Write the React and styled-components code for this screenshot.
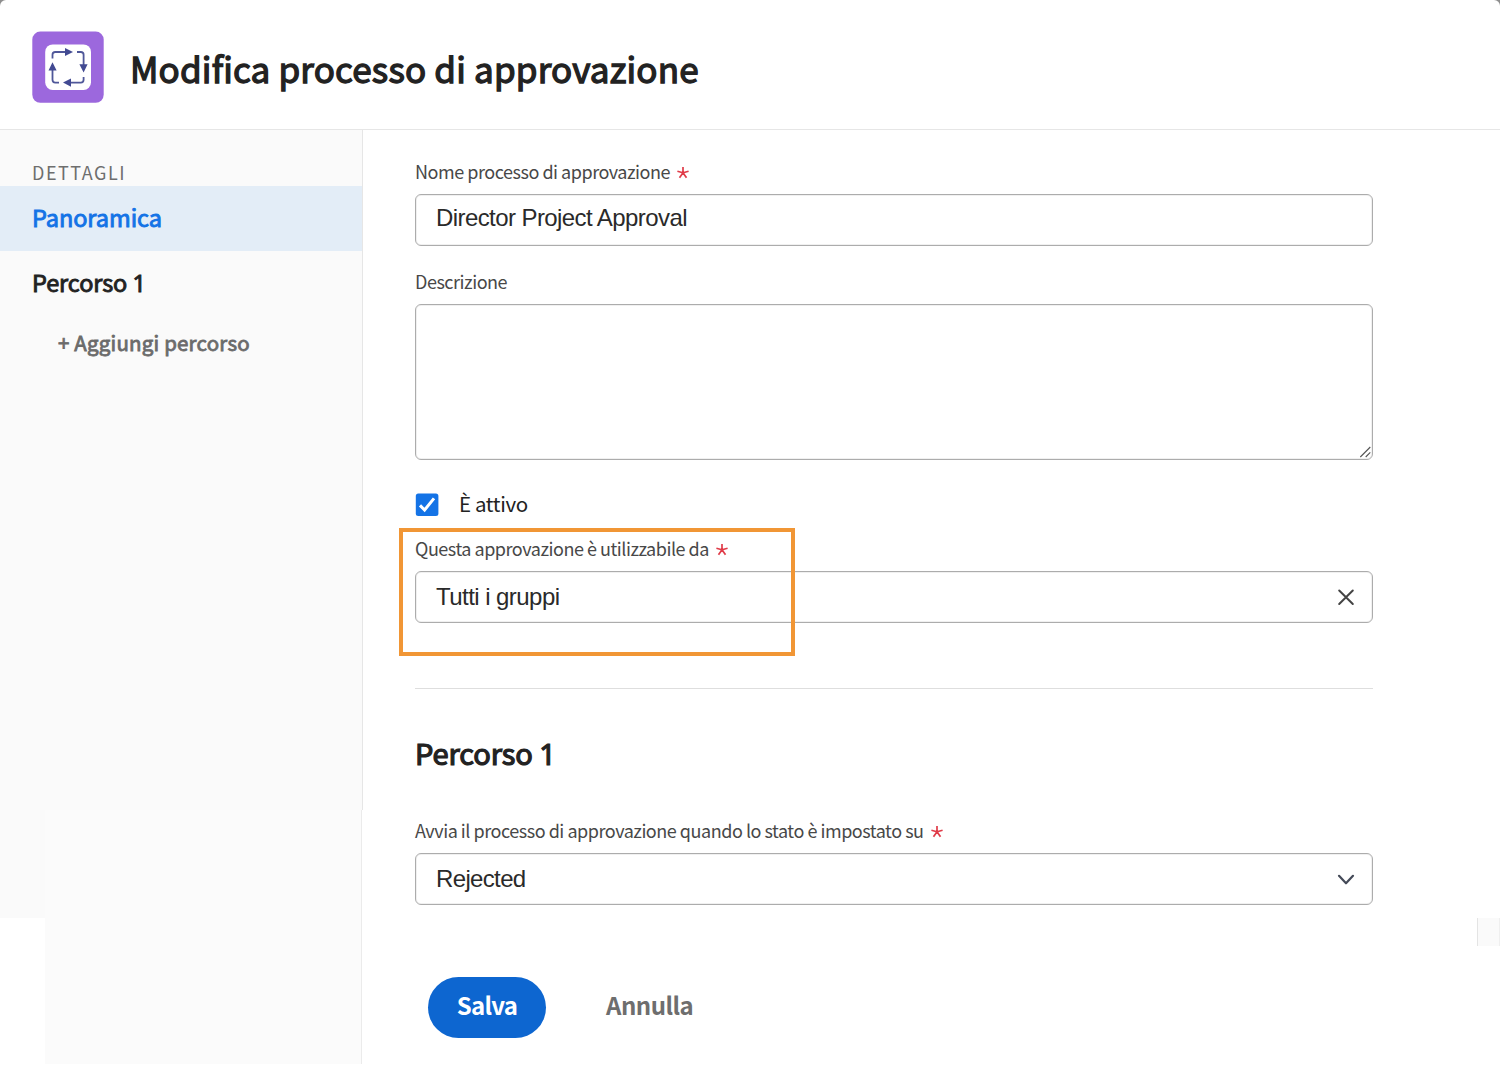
import React from "react";
import styled, { createGlobalStyle } from "styled-components";

const GlobalStyle = createGlobalStyle`
  *, *::before, *::after { box-sizing: border-box; }
  body { margin: 0; background: #8e8e8e; overflow: hidden; }
`;

const sans = `"Noto Sans CJK SC", "Noto Sans", sans-serif`;
const inputSans = `"Liberation Sans", Arial, sans-serif`;

const Dialog = styled.div`
  display: flex;
  flex-direction: column;
  width: 1500px;
  height: 1065px;
  background: #fff;
  border-radius: 6px 6px 0 0;
  font-family: ${sans};
  color: #222;
  overflow: hidden;
  white-space: nowrap;
`;

const Header = styled.header`
  display: flex;
  flex: none;
  height: 130px;
  padding: 31px 0 0 32px;
  border-bottom: 1px solid #e6e6e6;
`;

const Title = styled.h1`
  margin: 12px 0 0 26px;
  font-size: 35px;
  line-height: 49px;
  font-weight: 400;
  -webkit-text-stroke: 1.3px;
  letter-spacing: 0.17px;
`;

const Body = styled.div`
  display: flex;
  flex: 1;
`;

const Sidebar = styled.aside`
  display: flex;
  flex-direction: column;
  width: 363px;
  flex: none;
`;

const Nav = styled.nav`
  height: 680px;
  background: #fafafa;
  border-right: 1px solid #e6e6e6;
`;

const NavHeading = styled.div`
  padding: 29px 0 0 32px;
  height: 56px;
  font-size: 18px;
  line-height: 26px;
  letter-spacing: 1.5px;
  color: #6e6e6e;
`;

const NavItem = styled.div`
  height: 65px;
  padding-left: 32px;
  font-size: 23.5px;
  line-height: 63px;
  -webkit-text-stroke: 0.9px;
  letter-spacing: ${(p) => p.$spacing}px;
  color: ${(p) => (p.$active ? "#1473e6" : "#222")};
  background: ${(p) => (p.$active ? "#e3edf7" : "transparent")};
`;

const Digit = styled.span`
  font-family: "Noto Sans", sans-serif;
  line-height: 1;
`;

const AddPath = styled.div`
  padding-left: 58px;
  font-size: 20.5px;
  line-height: 52px;
  -webkit-text-stroke: 0.8px;
  letter-spacing: 0.2px;
  color: #6b6b6b;
`;

const NavFoot = styled.div`
  display: flex;
  flex: 1;
  align-items: flex-start;
`;

const FootEdge = styled.div`
  width: 45px;
  height: 108px;
  background: #fafafa;
`;

const FootFill = styled.div`
  width: 317px;
  height: 254px;
  background: #fbfbfb;
  border-right: 1px solid #ebebeb;
`;

const Main = styled.main`
  flex: 1;
  display: flex;
  flex-direction: column;
  padding-top: 28px;
`;

const Form = styled.form`
  width: 958px;
  margin-left: 52px;
`;

const Field = styled.div`
  display: flex;
  flex-direction: column;
  gap: ${(p) => p.$gap ?? 10}px;
  margin-top: ${(p) => p.$top ?? 0}px;
`;

const Label = styled.label`
  display: flex;
  align-items: center;
  gap: 7px;
  height: 26px;
  font-size: 18px;
  line-height: 26px;
  color: #484848;
  letter-spacing: -0.47px;
  svg { margin-top: 2px; }
`;

const Control = styled.div`
  display: flex;
  align-items: center;
  justify-content: space-between;
  height: 52px;
  padding: 0 17px 0 20px;
  padding-bottom: ${(p) => p.$lift ?? 0}px;
  border: 1px solid #acacac;
  border-radius: 6px;
  box-shadow: inset 0 0 0 1px #f0f0f0;
  font-family: ${inputSans};
  font-size: 24px;
  line-height: 30px;
  letter-spacing: ${(p) => p.$spacing}px;
  color: #2a2a2a;
`;

const TextBox = styled.div`
  display: flex;
  align-items: flex-end;
  justify-content: flex-end;
  height: 156px;
  padding: 1px;
  border: 1px solid #acacac;
  border-radius: 6px;
  box-shadow: inset 0 0 0 1px #f0f0f0;
`;

const CheckRow = styled.div`
  display: flex;
  align-items: center;
  gap: 20px;
  height: 26px;
  margin-top: 31px;
  font-size: 20.5px;
  line-height: 26px;
  letter-spacing: -0.35px;
  svg { margin-top: 1px; }
`;

const CheckText = styled.span`
  margin-bottom: 3px;
`;

const Highlighted = styled.div`
  position: relative;
`;

const Highlight = styled.div`
  position: absolute;
  left: -16px;
  top: -7px;
  width: 396px;
  height: 128px;
  border: 4px solid #f19635;
`;

const Divider = styled.hr`
  height: 1px;
  margin: 65px 0 0;
  border: 0;
  background: #dedede;
`;

const SectionTitle = styled.h2`
  height: 42px;
  margin: 43px 0 0;
  font-size: 29px;
  line-height: 41px;
  font-weight: 400;
  -webkit-text-stroke: 1.2px;
  letter-spacing: -0.1px;
`;

const ScrollRow = styled.div`
  display: flex;
  justify-content: flex-end;
  margin-top: 13px;
`;

const ScrollCorner = styled.div`
  width: 23px;
  height: 28px;
  background: #fafafa;
  border-left: 1px solid #e4e4e4;
  border-right: 1px solid #efefef;
`;

const Actions = styled.footer`
  display: flex;
  gap: 60px;
  padding: 31px 0 0 65px;
`;

const Button = styled.button`
  width: ${(p) => (p.$primary ? "118px" : "auto")};
  height: 61px;
  padding: 0 0 5px;
  border: 0;
  border-radius: 31px;
  background: ${(p) => (p.$primary ? "#0d66d0" : "transparent")};
  color: ${(p) => (p.$primary ? "#fff" : "#6e6e6e")};
  font: 700 24px/32px ${sans};
  letter-spacing: ${(p) => p.$spacing}px;
`;

const ProcessIcon = () => (
  <svg width="72" height="72" viewBox="32 31 72 72" fill="none">
    <rect x="32.3" y="31.6" width="71.4" height="71.2" rx="8" fill="#9c68dd" />
    <rect x="45.2" y="44.4" width="45.8" height="45.6" rx="7.5" fill="#fff" />
    <g stroke="#4f5799" strokeWidth="1.8">
      <path d="M52.5 58.5V54.8Q52.5 52 55.3 52H66" />
      <path d="M77 52H80.8Q83.6 52 83.6 54.8V65" />
      <path d="M83.6 77V79.8Q83.6 82.6 80.8 82.6H70" />
      <path d="M59 82.6H55.3Q52.5 82.6 52.5 79.8V70" />
    </g>
    <path
      fill="#424a92"
      d="M65 48L73 52L65 56ZM79.4 64.2H87.6L83.6 72.4ZM71 78.6V86.8L63 82.6ZM48.5 70.4H56.6L52.5 62.2Z"
    />
  </svg>
);

const Required = () => (
  <svg width="12" height="14" viewBox="0 0 12 14" fill="none" stroke="#e03c49" strokeWidth="1.7">
    <path d="M6 7.8V2M6 7.8L.4 6.2M6 7.8L11.6 6.2M6 7.8L2.5 12.8M6 7.8L9.5 12.8" />
  </svg>
);

const ResizeGrip = () => (
  <svg width="12" height="12" viewBox="0 0 12 12" stroke="#555" strokeWidth="1.1">
    <path d="M1.3 11L11.3 1M6.7 11L11.3 6.4" />
  </svg>
);

const CheckMark = () => (
  <svg width="24" height="24" viewBox="0 0 24 24" fill="none">
    <rect x=".8" y=".4" width="22.6" height="22.6" rx="2.5" fill="#1473e6" />
    <path d="M5 12.4L9.6 17L19 5.4" stroke="#fff" strokeWidth="3" />
  </svg>
);

const Clear = () => (
  <svg width="18" height="18" viewBox="0 0 18 18" stroke="#444" strokeWidth="2" strokeLinecap="round">
    <path d="M2.2 2.5L15.8 16M15.8 2.5L2.2 16" />
  </svg>
);

const Chevron = () => (
  <svg width="18" height="12" viewBox="0 0 18 12" fill="none" stroke="#444a58" strokeWidth="2.2" strokeLinecap="round" strokeLinejoin="round">
    <path d="M2 2.8L9 10.3L16 2.8" />
  </svg>
);

export default function App() {
  return (
    <Dialog>
      <GlobalStyle />
      <Header>
        <ProcessIcon />
        <Title>Modifica processo di approvazione</Title>
      </Header>
      <Body>
        <Sidebar>
          <Nav>
            <NavHeading>DETTAGLI</NavHeading>
            <NavItem $active $spacing={-0.05}>Panoramica</NavItem>
            <NavItem $spacing={-0.1}>Percorso <Digit>1</Digit></NavItem>
            <AddPath>+ Aggiungi percorso</AddPath>
          </Nav>
          <NavFoot>
            <FootEdge />
            <FootFill />
          </NavFoot>
        </Sidebar>
        <Main>
          <Form>
            <Field>
              <Label><span>Nome processo di approvazione</span><Required /></Label>
              <Control $lift={4} $spacing={-0.58}>Director Project Approval</Control>
            </Field>
            <Field $top={22}>
              <Label>Descrizione</Label>
              <TextBox><ResizeGrip /></TextBox>
            </Field>
            <CheckRow>
              <CheckMark />
              <CheckText>È attivo</CheckText>
            </CheckRow>
            <Highlighted>
              <Field $top={18}>
                <Label><span>Questa approvazione è utilizzabile da</span><Required /></Label>
                <Control $spacing={-0.55}>Tutti i gruppi<Clear /></Control>
              </Field>
              <Highlight />
            </Highlighted>
            <Divider />
            <SectionTitle>Percorso <Digit>1</Digit></SectionTitle>
            <Field $top={43}>
              <Label><span>Avvia il processo di approvazione quando lo stato è impostato su</span><Required /></Label>
              <Control $spacing={-0.65}>Rejected<Chevron /></Control>
            </Field>
          </Form>
          <ScrollRow><ScrollCorner /></ScrollRow>
          <Actions>
            <Button type="button" $primary $spacing={-0.7}>Salva</Button>
            <Button type="button" $spacing={-0.5}>Annulla</Button>
          </Actions>
        </Main>
      </Body>
    </Dialog>
  );
}
